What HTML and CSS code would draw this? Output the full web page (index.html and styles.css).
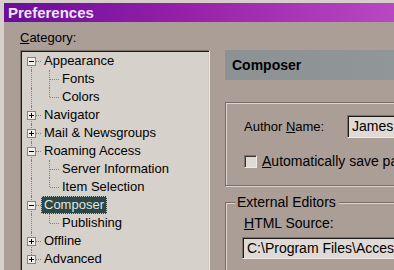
FILE: index.html
```html
<!DOCTYPE html>
<html>
<head>
<meta charset="utf-8">
<link rel="stylesheet" href="styles.css">
</head>
<body>
<div class="frame">
  <div class="titlebar">Preferences</div>
  <div class="content">
    <div class="leftcol">
      <div class="catlabel"><u>C</u>ategory:</div>
      <div class="tree">
        <div class="row"><span class="g first"><svg class="box" width="9" height="9" viewBox="0 0 9 9"><rect x="0.5" y="0.5" width="8" height="8" fill="#f2eeea" stroke="#8a817b"/><path d="M2 4.5h5" stroke="#000"/></svg></span><span class="t">Appearance</span></div>
        <div class="row"><span class="g pass"></span><span class="g tee"></span><span class="t">Fonts</span></div>
        <div class="row"><span class="g pass"></span><span class="g tee last"></span><span class="t">Colors</span></div>
        <div class="row"><span class="g"><svg class="box" width="9" height="9" viewBox="0 0 9 9"><rect x="0.5" y="0.5" width="8" height="8" fill="#f2eeea" stroke="#8a817b"/><path d="M2 4.5h5M4.5 2v5" stroke="#000"/></svg></span><span class="t">Navigator</span></div>
        <div class="row"><span class="g"><svg class="box" width="9" height="9" viewBox="0 0 9 9"><rect x="0.5" y="0.5" width="8" height="8" fill="#f2eeea" stroke="#8a817b"/><path d="M2 4.5h5M4.5 2v5" stroke="#000"/></svg></span><span class="t">Mail &amp; Newsgroups</span></div>
        <div class="row"><span class="g"><svg class="box" width="9" height="9" viewBox="0 0 9 9"><rect x="0.5" y="0.5" width="8" height="8" fill="#f2eeea" stroke="#8a817b"/><path d="M2 4.5h5" stroke="#000"/></svg></span><span class="t">Roaming Access</span></div>
        <div class="row"><span class="g pass"></span><span class="g tee"></span><span class="t">Server Information</span></div>
        <div class="row"><span class="g pass"></span><span class="g tee last"></span><span class="t">Item Selection</span></div>
        <div class="row"><span class="g"><svg class="box" width="9" height="9" viewBox="0 0 9 9"><rect x="0.5" y="0.5" width="8" height="8" fill="#f2eeea" stroke="#8a817b"/><path d="M2 4.5h5" stroke="#000"/></svg></span><span class="t sel">Composer</span></div>
        <div class="row"><span class="g pass"></span><span class="g tee last"></span><span class="t">Publishing</span></div>
        <div class="row"><span class="g"><svg class="box" width="9" height="9" viewBox="0 0 9 9"><rect x="0.5" y="0.5" width="8" height="8" fill="#f2eeea" stroke="#8a817b"/><path d="M2 4.5h5M4.5 2v5" stroke="#000"/></svg></span><span class="t">Offline</span></div>
        <div class="row"><span class="g last"><svg class="box" width="9" height="9" viewBox="0 0 9 9"><rect x="0.5" y="0.5" width="8" height="8" fill="#f2eeea" stroke="#8a817b"/><path d="M2 4.5h5M4.5 2v5" stroke="#000"/></svg></span><span class="t">Advanced</span></div>
      </div>
    </div>
    <div class="rightcol">
      <div class="header">Composer</div>
      <div class="group g1">
        <div class="field">
          <span class="lbl">Author <u>N</u>ame:</span>
          <span class="input name">James</span>
        </div>
        <div class="check">
          <span class="cb"></span>
          <span class="cbl"><u>A</u>utomatically save page every</span>
        </div>
      </div>
      <div class="group g2">
        <div class="legend">External Editors</div>
        <div class="lbl2"><u>H</u>TML Source:</div>
        <div class="input path">C:\Program Files\Accessories\</div>
      </div>
    </div>
  </div>
</div>
</body>
</html>
```
FILE: styles.css
```css
html, body {
  margin: 0;
  padding: 0;
  width: 394px;
  height: 270px;
  overflow: hidden;
  font-family: "Liberation Sans", Arial, sans-serif;
  font-size: 13px;
  color: #000;
}
.frame {
  width: 394px;
  height: 270px;
  box-sizing: border-box;
  padding: 3px 0 0 4px;
  background: #d6cec9;
  display: flex;
  flex-direction: column;
}
.titlebar {
  height: 19px;
  line-height: 19px;
  padding-left: 4px;
  font-weight: bold;
  font-size: 15px;
  color: #ece4f4;
  background: linear-gradient(to right, #6a0c9c, #9520a8 45%, #b848c2);
  flex-shrink: 0;
}
.content {
  flex: 1;
  background: #ab9e97;
  display: flex;
  gap: 15px;
  padding-left: 16px;
  overflow: hidden;
}
.leftcol {
  width: 190px;
  flex-shrink: 0;
  padding-top: 8px;
}
.catlabel {
  height: 16px;
  line-height: 16px;
  margin-bottom: 4px;
}
.tree {
  height: 240px;
  box-sizing: border-box;
  background: #d7d1cc;
  border-style: solid;
  border-width: 1px;
  border-color: #7e746e #efeae6 #efeae6 #7e746e;
  box-shadow: inset 1px 1px 0 #1e1a18, inset -1px -1px 0 #cfc7c1;
  padding: 1px 0 0 1px;
}
.row {
  display: flex;
  align-items: center;
  height: 18px;
  padding-left: 1px;
}
.g {
  width: 18px;
  height: 18px;
  position: relative;
  flex-shrink: 0;
}
.g::before {
  content: "";
  position: absolute;
  left: 8px;
  top: 0;
  bottom: 0;
  border-left: 1px dotted #808080;
}
.g.first::before { top: 9px; }
.g.last::before { bottom: 9px; }
.g::after {
  content: "";
  position: absolute;
  left: 9px;
  right: 0;
  top: 9px;
  border-top: 1px dotted #808080;
}
.g.pass::after { display: none; }
.box {
  position: absolute;
  left: 4px;
  top: 5px;
  z-index: 1;
  display: block;
}
.t {
  padding: 1px 2px;
  line-height: 14px;
  border: 1px solid transparent;
  white-space: nowrap;
}
.t.sel {
  background: #2d4745;
  color: #dfe6e4;
  border: 1px dotted #b9c4c2;
}
.rightcol {
  flex: 1;
  padding-top: 28px;
  min-width: 0;
}
.header {
  height: 30px;
  line-height: 30px;
  padding-left: 7px;
  font-weight: bold;
  font-size: 14px;
  background: linear-gradient(to right, #8c9294, #959a9c);
  width: 300px;
}
.group {
  border: 1px solid #776c67;
  box-shadow: inset 1px 1px 0 #ddd5d0, 1px 1px 0 #ddd5d0;
  width: 300px;
  box-sizing: border-box;
}
.g1 {
  margin-top: 22px;
  height: 84px;
  padding: 12px 0 0 18px;
}
.field {
  display: flex;
  align-items: center;
  height: 23px;
}
.lbl {
  width: 103px;
  flex-shrink: 0;
}
.input {
  background: #dfdad6;
  border-style: solid;
  border-width: 1px;
  border-color: #7e746e #efeae6 #efeae6 #7e746e;
  box-shadow: inset 1px 1px 0 #1e1a18;
  box-sizing: border-box;
  height: 23px;
  line-height: 20px;
  padding-left: 4px;
  white-space: nowrap;
  font-size: 14px;
}
.name {
  width: 100px;
}
.check {
  display: flex;
  align-items: center;
  margin-top: 16px;
  height: 14px;
}
.cb {
  width: 13px;
  height: 13px;
  box-sizing: border-box;
  background: #dfdad6;
  border-style: solid;
  border-width: 1px;
  border-color: #7e746e #efeae6 #efeae6 #7e746e;
  box-shadow: inset 1px 1px 0 #3a3430;
  margin-right: 5px;
  flex-shrink: 0;
}
.cbl {
  white-space: nowrap;
  font-size: 14px;
}
.g2 {
  margin-top: 16px;
  height: 80px;
  border-right: none;
  padding-left: 16px;
}
.legend {
  width: fit-content;
  margin-top: -9px;
  margin-left: -7px;
  padding: 0 3px 0 2px;
  background: #ab9e97;
  line-height: 16px;
  font-size: 14px;
}
.lbl2 {
  margin-top: 5px;
  margin-left: 2px;
  line-height: 16px;
  font-size: 14px;
}
.path {
  margin-top: 6px;
  width: 200px;
  height: 22px;
}
```
